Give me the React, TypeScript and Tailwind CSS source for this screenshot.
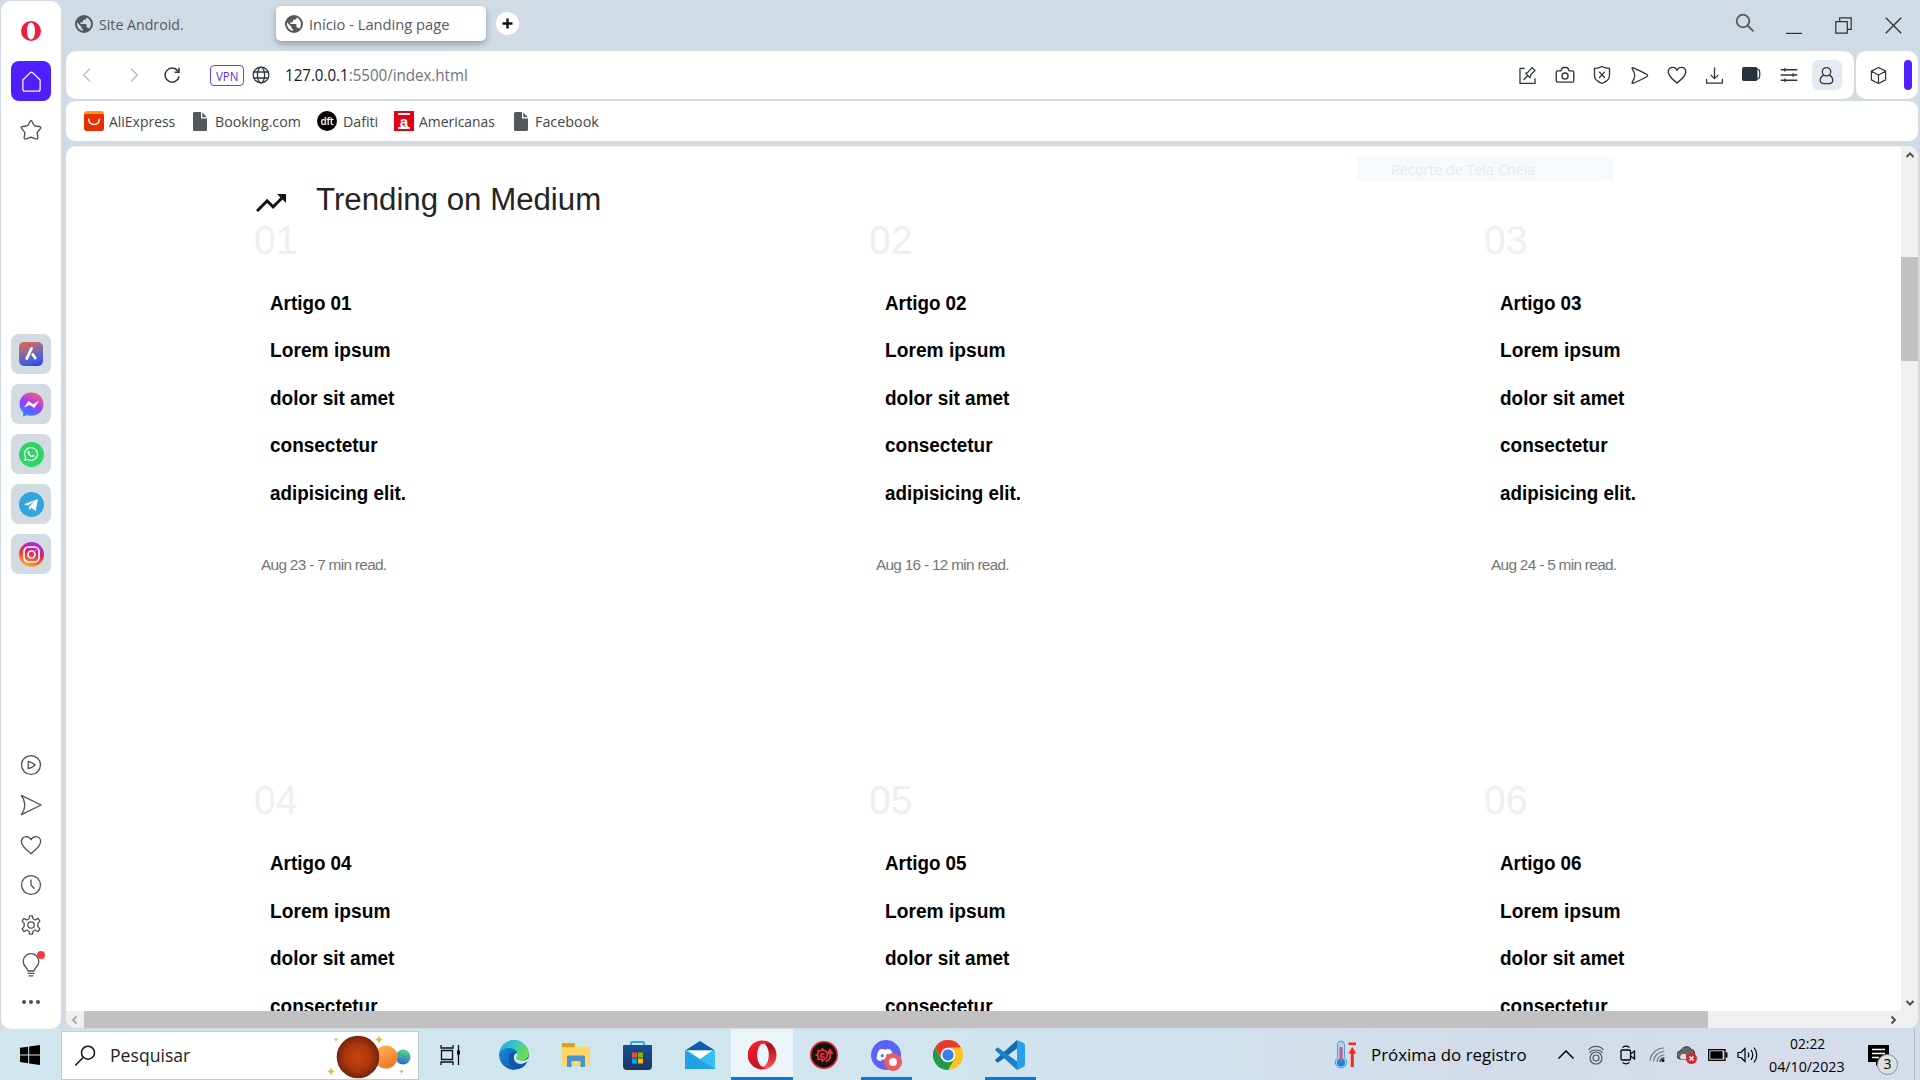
import { useLayoutEffect, useRef, useState, type ReactNode } from "react";
import { FaWhatsapp, FaDiscord } from "react-icons/fa";

/* Text set to an exact advance width, whatever the font's own metrics are. */
function Fit({ w, className = "", children }: { w: number; className?: string; children: ReactNode }) {
  const ref = useRef<HTMLSpanElement>(null);
  const [s, setS] = useState(1);
  useLayoutEffect(() => {
    if (ref.current) setS(w / ref.current.offsetWidth);
  }, [w]);
  return (
    <span className="block shrink-0" style={{ width: w }}>
      <span ref={ref} className={`inline-block origin-left whitespace-nowrap ${className}`} style={{ transform: `scaleX(${s})` }}>
        {children}
      </span>
    </span>
  );
}

function Ico({ size = 22, sw = 1.4, children, className = "" }: { size?: number; sw?: number; children: ReactNode; className?: string }) {
  return (
    <svg width={size} height={size} viewBox="0 0 24 24" fill="none" stroke="currentColor" strokeWidth={sw} strokeLinecap="round" strokeLinejoin="round" className={`shrink-0 ${className}`}>
      {children}
    </svg>
  );
}

function Earth() {
  return (
    <svg width="18" height="18" viewBox="0 0 24 24" className="shrink-0">
      <path fill="#55585b" d="M12 0a12 12 0 1 0 0 24 12 12 0 0 0 0-24zM10.600 21.300A9.400 9.400 0 0 1 2.600 12c0-.7.1-1.400.2-2.100l5.700 5.700v1.200c0 1.300 1 2.300 2.100 2.300zM18.700 18.400a2.300 2.300 0 0 0-2.200-1.600h-1.200v-3.500c0-.6-.5-1.200-1.100-1.200H7.200V9.700h2.300c.7 0 1.200-.5 1.200-1.100V6.200H13c1.300 0 2.400-1 2.400-2.300v-.5a9.300 9.300 0 0 1 3.300 15z" />
    </svg>
  );
}

function PageIcon() {
  return (
    <svg width="14" height="19" viewBox="0 0 14 19" className="shrink-0">
      <path fill="#55585b" d="M1.500 0H8v6.500h6v11a1.500 1.500 0 0 1-1.500 1.500h-11A1.500 1.500 0 0 1 0 17.500v-16A1.500 1.500 0 0 1 1.500 0z" />
      <path fill="#55585b" d="M9.300.3 13.700 5.200H9.300z" />
    </svg>
  );
}

function AliIcon() {
  return (
    <svg width="20" height="20" viewBox="0 0 20 20" className="shrink-0">
      <rect width="20" height="20" rx="3" fill="#ff9a00" />
      <path d="M0 4.500Q0 3 1.500 3h17Q20 3 20 4.500V17a3 3 0 0 1-3 3H3a3 3 0 0 1-3-3z" fill="#e62e04" />
      <path d="M4.700 8.200c.5 7 10.100 7 10.600 0" fill="none" stroke="#fff" strokeWidth="1.500" strokeLinecap="round" />
    </svg>
  );
}

function Heart({ size = 22, sw = 1.4 }: { size?: number; sw?: number }) {
  return (
    <Ico size={size} sw={sw}>
      <path d="M12 21.500C7 17.600 1.500 13.500 1.500 8.300c0-3.300 2.300-5.500 5.200-5.500 2.300 0 4.300 1.200 5.300 3.500 1-2.300 3-3.500 5.300-3.500 2.900 0 5.200 2.200 5.200 5.500 0 5.200-5.500 9.300-10.500 13.200z" />
    </Ico>
  );
}

function Tab({ active, w, children }: { active?: boolean; w: number; children: string }) {
  return (
    <div className={active ? "flex h-[35px] w-[210px] items-center gap-[6px] rounded-[5px] bg-white pl-[9px] shadow-[0_3px_6px_rgba(60,80,100,0.45)]" : "flex h-[35px] w-[201px] items-center gap-[6px]"}>
      <Earth />
      <Fit w={w} className="-mt-px text-[15px] text-[#55595d]">{children}</Fit>
    </div>
  );
}

function TopBar() {
  return (
    <div className="flex h-[51px] shrink-0 items-start pl-[9px] pt-[6px] text-[#43494f]">
      <Tab w={85}>Site Android.</Tab>
      <Tab active w={140}>Início - Landing page</Tab>
      <div className="ml-[10px] mt-[6px] flex h-[23px] w-[23px] items-center justify-center rounded-full bg-white text-[#111]">
        <svg width="11" height="11" viewBox="0 0 11 11"><path d="M5.500.5v10M.5 5.500h10" stroke="currentColor" strokeWidth="2.400" /></svg>
      </div>
      <div className="ml-auto flex items-start">
        <svg width="20" height="20" viewBox="0 0 20 20" className="mt-[7px]" fill="none" stroke="#555b61" strokeWidth="1.800"><circle cx="8" cy="8" r="6.300" /><path d="m12.500 12.500 6 5.800" /></svg>
        <svg width="16" height="14" viewBox="0 0 16 14" className="ml-[31px] mt-[14px]"><path d="M0 13.500h16" stroke="#2b3239" strokeWidth="1.400" /></svg>
        <svg width="17" height="17" viewBox="0 0 17 17" className="ml-[33px] mt-[11px]" fill="none" stroke="#2b3239" strokeWidth="1.200"><path d="M.8 4.700h11.500v11.500H.8zM4.700 4.500V.8h11.500v11.500h-3.700" /></svg>
        <svg width="17" height="17" viewBox="0 0 17 17" className="ml-[33px] mr-[18px] mt-[11px]" fill="none" stroke="#2b3239" strokeWidth="1.300"><path d="m.8.8 15.400 15.400M16.200.8.8 16.200" /></svg>
      </div>
    </div>
  );
}

const toolIcons: ReactNode[] = [
  <Ico key="a" size={19} sw={1.6}><path d="M8 3H2.500v19h19V16M7.500 17l5-5M9.800 9.300l5.500 5.500 1-4 5.200-5-3.500-3.800-5.200 5.500z" /></Ico>,
  <Ico key="b" size={20} sw={1.6}><path d="M3 7h4l1.500-3q.5-1 1.500-1h4q1 0 1.500 1L17 7h4q1.500 0 1.500 1.500V19q0 1.500-1.500 1.500H3q-1.500 0-1.500-1.500V8.500Q1.500 7 3 7z" /><circle cx="12" cy="13.300" r="3.700" /></Ico>,
  <Ico key="c" size={20} sw={1.6}><path d="M12 1.800c3 1.800 6 2.200 9 2.200v9c0 5-4.500 7.500-9 9.200C7.500 20.500 3 18 3 13V4c3 0 6-.4 9-2.200zM9 8.500l6 6.500M15 8.500 9 15" /></Ico>,
  <Ico key="d" size={19} sw={1.6}><path d="M3.500 2c6.500 2.800 12.500 5.500 18 8.800q1.500 1.200 0 2.400c-5.500 3.300-11.500 6-18 8.800Q2 22 3 20c4-6 4-10 0-16Q2 2 3.500 2z" /></Ico>,
  <Heart key="e" size={20} sw={1.7} />,
  <Ico key="f" size={19} sw={1.6}><path d="M12 2.500v13M7.500 11.500 12 16l4.500-4.500M2 17v4.500h20V17" /></Ico>,
  <svg key="g" width="19" height="14" viewBox="0 0 19 14" className="-ml-[2px] -mt-[2px]"><rect width="15.500" height="14" rx="1.800" fill="#27323a" /><path d="M15 2c2.500.5 2.800 1.500 2.800 5s-.3 4.500-2.800 5" fill="none" stroke="#27323a" strokeWidth="1.200" /></svg>,
  <Ico key="h" size={18} sw={1.7} className="-ml-px"><path d="M1.500 5h21M1.500 12h21M1.500 19h21M6.500 3.300v3.400M17.500 10.300v3.400M6.500 17.300v3.400" /></Ico>,
  <div key="i" className="-ml-px flex h-[30px] w-[30px] items-center justify-center rounded-[6px] bg-[#e5eaf0]"><Ico size={19} sw={1.6}><circle cx="12" cy="7.300" r="5.300" /><path d="M8.500 11.500C5.500 13 4 15.500 4 18.500c0 2.500 2.500 3.800 8 3.800s8-1.300 8-3.800c0-3-1.500-5.500-4.500-7" /></Ico></div>,
];

function AddressBar() {
  return (
    <div className="flex h-[48px] shrink-0 gap-[2px] text-[#2b333b]">
      <div className="flex w-[1788px] items-center rounded-[10px] bg-white">
        <Ico size={16} sw={1.8} className="ml-[13px] text-[#b4b9be]"><path d="M16 3 7 12l9 9" /></Ico>
        <Ico size={16} sw={1.8} className="ml-[31px] text-[#b4b9be]"><path d="m8 3 9 9-9 9" /></Ico>
        <svg width="17" height="16" viewBox="0 0 17 16" className="ml-[22px]" fill="none" stroke="#2b333b" strokeWidth="1.500"><path d="M13.800 4A7 7 0 1 0 15 9.500M15 .8v4.400h-4.400" /></svg>
        <div className="ml-[29px] flex h-[21px] w-[34px] items-center justify-center rounded-[4px] border border-[#6540e8]">
          <Fit w={22} className="text-[12px] leading-[18px] text-[#5a2ee0]">VPN</Fit>
        </div>
        <Ico size={18} sw={1.7} className="ml-[8px]"><circle cx="12" cy="12" r="10.500" /><ellipse cx="12" cy="12" rx="4.800" ry="10.500" /><path d="M2.500 8h19M2.500 16h19" /></Ico>
        <Fit w={183} className="ml-[15px] text-[16px] text-[#6b747d]"><span className="text-[#15191d]">127.0.0.1</span>:5500/index.html</Fit>
        <div className="ml-auto mr-[8px] flex">
          {toolIcons.map((n, i) => (
            <div key={i} className="flex h-[30px] w-[37.500px] items-center justify-center">{n}</div>
          ))}
        </div>
      </div>
      <div className="flex w-[62px] items-center rounded-[10px] bg-white pl-[13px]">
        <Ico size={19} sw={1.5}><path d="m12 2 9 4.500v11L12 22l-9-4.500v-11zM3 6.500l9 5 9-5M12 11.500V22" /></Ico>
        <div className="ml-[16px] h-[30px] w-[8px] rounded-[4px] bg-[#4f1fff]" />
      </div>
    </div>
  );
}

function Bookmarks() {
  const t = "text-[15px] text-[#3f454b]";
  return (
    <div className="mt-[2px] flex h-[40px] w-[1852px] shrink-0 items-center rounded-[9px] bg-white pl-[18px]">
      <AliIcon />
      <div className="w-[5px]" />
      <Fit w={66} className={t}>AliExpress</Fit>
      <div className="w-[18px]" />
      <PageIcon />
      <div className="w-[8px]" />
      <Fit w={86} className={t}>Booking.com</Fit>
      <div className="ml-[16px] mr-[6px] flex h-[20px] w-[20px] items-center justify-center rounded-full bg-black">
        <span className="text-[10px] font-semibold leading-[18px] tracking-[-0.3px] text-white">dft</span>
      </div>
      <Fit w={35} className={t}>Dafiti</Fit>
      <div className="ml-[16px] mr-[5px] flex h-[20px] w-[20px] flex-col items-center justify-between bg-[#e60014] py-[2px]">
        <div className="h-[2px] w-[12px] bg-white" />
        <span className="font-['Liberation_Sans'] text-[15px] font-bold leading-[7px] text-white">a</span>
        <div className="h-[2px] w-[12px] bg-white" />
      </div>
      <Fit w={76} className={t}>Americanas</Fit>
      <div className="w-[19px]" />
      <PageIcon />
      <div className="w-[7px]" />
      <Fit w={64} className={t}>Facebook</Fit>
    </div>
  );
}

function Article({ n, meta, metaW }: { n: string; meta?: string; metaW?: number }) {
  return (
    <div className="h-[560.500px] w-[615px] shrink-0">
      <div className="h-[40px] text-[40px] leading-[40px] text-[#efefef]">
        <Fit w={44}>{n}</Fit>
      </div>
      <div className="pl-[15.500px] pt-[20px] text-[19.500px] font-bold leading-[47.600px] text-black">
        <Fit w={82}>Artigo {n}</Fit>
        <Fit w={120}>Lorem ipsum</Fit>
        <Fit w={124.5}>dolor sit amet</Fit>
        <Fit w={108}>consectetur</Fit>
        {meta && <Fit w={136}>adipisicing elit.</Fit>}
      </div>
      {meta && (
        <div className="pl-[7px] pt-[38px] text-[15.500px] leading-[20px] text-[#757575]">
          <Fit w={metaW ?? 125} className="tracking-[-0.7px]">{meta}</Fit>
        </div>
      )}
    </div>
  );
}

function Chevron({ d, color = "#505050" }: { d: string; color?: string }) {
  return (
    <svg width="10" height="10" viewBox="0 0 10 10" fill="none" stroke={color} strokeWidth="2"><path d={d} /></svg>
  );
}

function Content() {
  return (
    <div className="mt-[5px] flex h-[882px] w-[1852px] shrink-0 flex-col overflow-hidden rounded-[10px] bg-white font-['Liberation_Sans',sans-serif]">
      <div className="flex h-[865px]">
        <div className="relative w-[1835px] overflow-hidden border-t border-[#f4f4f4] pl-[188px]">
          <div className="absolute left-[1291px] top-[10px] h-[24px] w-[257px] bg-[#f5faff] pl-[34px] font-['Open_Sans'] text-[15px] leading-[25px] text-[#e3ebf0]">
            <Fit w={144}>Recorte de Tela Cheia</Fit>
          </div>
          <div className="flex h-[72.500px] items-start pt-[31px]">
            <svg width="36" height="36" viewBox="0 0 24 24" className="-ml-[1px] mt-[7px]"><path fill="#151515" d="m16 6 2.290 2.290-4.880 4.880-4-4L2 16.590 3.410 18l6-6 4 4 6.300-6.290L22 12V6z" /></svg>
            <div className="ml-[27px] text-[31px] leading-[44px] text-[#242424]"><Fit w={285}>Trending on Medium</Fit></div>
          </div>
          <div className="flex w-[1900px] flex-wrap">
            <Article n="01" meta="Aug 23 - 7 min read." metaW={125} />
            <Article n="02" meta="Aug 16 - 12 min read." metaW={132.5} />
            <Article n="03" meta="Aug 24 - 5 min read." metaW={125} />
            <Article n="04" />
            <Article n="05" />
            <Article n="06" />
          </div>
        </div>
        <div className="flex w-[17px] flex-col items-center bg-[#f0f0f0]">
          <div className="flex h-[18px] items-center"><Chevron d="M1.500 7 5 3.500 8.500 7" /></div>
          <div className="mt-[93px] h-[104px] w-full bg-[#c1c1c1]" />
          <div className="mt-auto flex h-[18px] items-center"><Chevron d="M1.500 4 5 7.500 8.500 4" /></div>
        </div>
      </div>
      <div className="flex h-[17px] items-center bg-[#f0f0f0]">
        <div className="flex w-[18px] justify-center"><Chevron d="M6.500 1.500 3 5l3.500 3.500" color="#a8a8a8" /></div>
        <div className="h-full w-[1624px] bg-[#c1c1c1]" />
        <div className="ml-auto mr-[20px]"><Chevron d="M3.500 1.500 7 5 3.500 8.500" /></div>
      </div>
    </div>
  );
}

function AppTile({ children }: { children: ReactNode }) {
  return <div className="flex h-[40px] w-[40px] items-center justify-center rounded-[8px] bg-[#d1dbe1]">{children}</div>;
}

function Sidebar() {
  return (
    <div className="ml-[1px] mt-[1px] flex h-[1028px] w-[60px] shrink-0 flex-col items-center rounded-[10px] bg-white text-[#4a5056]">
      <svg width="20" height="20" viewBox="0 0 20 20" className="mt-[20px]">
        <path fillRule="evenodd" fill="#f21c3c" d="M10 0a10 10 0 1 1 0 20 10 10 0 0 1 0-20zm0 1.500C7.500 1.500 6 5.500 6 10s1.500 8.500 4 8.500 4-4 4-8.500-1.500-8.500-4-8.500z" />
      </svg>
      <div className="mt-[20px] flex h-[40px] w-[40px] items-center justify-center rounded-[8px] bg-[#4f1fff] text-white">
        <Ico size={23} sw={1.3}><path d="M3 10.500 10.500 3q1.500-1.300 3 0L21 10.500V20q0 2-2 2H5q-2 0-2-2z" /></Ico>
      </div>
      <Ico size={24} sw={1.4} className="mt-[17px]"><path d="M12 2.500c1.300 0 2 4 3.300 5s6 .5 6.500 1.800-3.200 3.700-3.600 5.300 1.500 5.400.3 6.200S13.600 19.300 12 19.300s-5.300 2.300-6.500 1.500.7-4.600.3-6.200S1.800 10.600 2.200 9.300s5.200-.8 6.500-1.800 2-5 3.300-5z" /></Ico>
      <div className="mt-[192px] flex flex-col gap-[10px]">
        <AppTile>
          <div className="flex h-[24px] w-[24px] items-center justify-center rounded-[5px] bg-[linear-gradient(160deg,#e0604f_5%,#8f6b9a_40%,#3f5fe0_75%,#4a2fd0)]">
            <svg width="24" height="24" viewBox="0 0 24 24" stroke="#fff" strokeLinecap="round" fill="none"><path d="M12.500 6.500 7.800 16.500" strokeWidth="2.800" /><path d="m13.800 12.500 2.400 3.500" strokeWidth="2.800" /></svg>
          </div>
        </AppTile>
        <AppTile>
          <svg width="25" height="25" viewBox="0 0 25 25">
            <defs><linearGradient id="ms" x1="0.200" y1="1" x2="0.700" y2="0"><stop offset="0" stopColor="#1890ff" /><stop offset="0.500" stopColor="#9a3dfb" /><stop offset="1" stopColor="#ff5c78" /></linearGradient></defs>
            <path fill="url(#ms)" d="M12.500.5C5.700.5.500 5.400.500 12c0 3.400 1.200 6 3.700 8.300v4.200l3.600-1.500c1.400.5 3 .8 4.700.8 6.800 0 12-5 12-11.700S19.300.5 12.500.5z" />
            <path fill="#fff" d="m5 15.500 4.500-6.500 4.500 3 6-3-4.700 7-4.800-3z" />
          </svg>
        </AppTile>
        <AppTile>
          <div className="flex h-[25px] w-[25px] items-center justify-center rounded-full bg-[#2fd366] text-[16px] text-white"><FaWhatsapp /></div>
        </AppTile>
        <AppTile>
          <svg width="25" height="25" viewBox="0 0 25 25"><circle cx="12.500" cy="12.500" r="12.500" fill="#32a5dc" /><path fill="#fff" d="m5 12.300 14-5.300-2.400 12-4.200-3-2 2-.4-3.600 6-5.500-7.400 4.700z" /></svg>
        </AppTile>
        <AppTile>
          <div className="flex h-[25px] w-[25px] items-center justify-center rounded-full bg-[linear-gradient(20deg,#ffc04a_5%,#fb6a28_30%,#e0245f_55%,#a82bd8_85%)]">
            <svg width="17" height="17" viewBox="0 0 17 17" fill="none" stroke="#fff" strokeWidth="1.700"><rect x="1" y="1" width="15" height="15" rx="4.500" /><circle cx="8.500" cy="8.500" r="3.500" /><path d="M12.500 4.300h.6" /></svg>
          </div>
        </AppTile>
      </div>
      <div className="mt-[180px] flex flex-col items-center gap-[18px]">
        <Ico size={22} sw={1.400}><circle cx="12" cy="12" r="10.300" /><path d="M9 8c3 .9 5.500 2 7.500 4-2 2-4.500 3.100-7.500 4z" /></Ico>
        <Ico size={22} sw={1.400}><path d="M1.500 1.500 23 12 1.500 22.500Q9 12 1.500 1.500z" /></Ico>
        <Heart />
        <Ico size={22} sw={1.400}><circle cx="12" cy="12" r="10.300" /><path d="M12 6.500V12l3.500 3.500" /></Ico>
        <Ico size={22} sw={1.400}><path d="M9.800 5.200 10.500 2h3l.7 3.200 2.300 1.300 3.200-1.700 2 3-2.200 2.500v3.400l2.200 2.500-2 3-3.200-1.700-2.300 1.300-.7 3.200h-3l-.7-3.200-2.300-1.300-3.200 1.700-2-3 2.200-2.500v-3.400L2.300 7.800l2-3 3.200 1.700z" /><circle cx="12" cy="12" r="3.500" /></Ico>
        <div className="relative">
          <Ico size={24} sw={1.300} className="-my-[1px]"><path d="M9 18c0-3-4.800-4-4.800-9.500a7.800 7.800 0 0 1 15.600 0C19.800 14 15 15 15 18zM9 20.300h6M10 22.800h4" /></Ico>
          <div className="absolute -top-[3px] left-[18px] h-[8px] w-[8px] rounded-full bg-[#fa3a3a]" />
        </div>
        <svg width="18" height="4" viewBox="0 0 18 4" className="mt-[6px]" fill="#4a5056"><circle cx="2" cy="2" r="2" /><circle cx="9" cy="2" r="2" /><circle cx="16" cy="2" r="2" /></svg>
      </div>
    </div>
  );
}

function SearchArt() {
  return (
    <svg width="86" height="46" viewBox="0 0 86 46">
      <defs>
        <radialGradient id="mars"><stop offset="0" stopColor="#c8440e" /><stop offset="0.600" stopColor="#ac360c" /><stop offset="1" stopColor="#74240c" /></radialGradient>
        <linearGradient id="venus" x1="0" y1="0" x2="0.500" y2="1"><stop offset="0" stopColor="#ffb95e" /><stop offset="1" stopColor="#f07a28" /></linearGradient>
        <linearGradient id="earth" x1="0.600" y1="0" x2="0.400" y2="1"><stop offset="0" stopColor="#58d68a" /><stop offset="1" stopColor="#2868d8" /></linearGradient>
      </defs>
      <circle cx="76" cy="24" r="7.500" fill="url(#earth)" />
      <circle cx="59" cy="24" r="11.500" fill="url(#venus)" />
      <circle cx="31" cy="24" r="21.300" fill="url(#mars)" />
      <g fill="#e3bd3c">
        <path d="M52 2.500 53.200 5.200 56 6.500 53.200 7.700 52 10.500 50.800 7.700 48 6.500 50.800 5.200z" />
        <path d="M4 34.500 5.200 37.200 8 38.500 5.200 39.700 4 42.500 2.800 39.700 0 38.500 2.800 37.200z" />
        <path d="M9 4 9.700 5.800 11.500 6.500 9.700 7.200 9 9 8.300 7.200 6.500 6.500 8.300 5.800zM74.500 36 75.200 37.800 77 38.500 75.200 39.200 74.500 41 73.800 39.200 72 38.500 73.800 37.800z" />
      </g>
    </svg>
  );
}

const taskIcons: { key: string; active?: boolean; line?: boolean; icon: ReactNode }[] = [
  {
    key: "edge",
    icon: (
      <svg width="30" height="30" viewBox="0 0 30 30">
        <defs>
          <linearGradient id="eg" x1="0" y1="0" x2="1" y2="0.400"><stop offset="0" stopColor="#2aa5d8" /><stop offset="0.500" stopColor="#36c4c8" /><stop offset="1" stopColor="#6be04e" /></linearGradient>
          <linearGradient id="eb" x1="0" y1="0" x2="1" y2="1"><stop offset="0" stopColor="#1d8fe0" /><stop offset="1" stopColor="#0b4f9e" /></linearGradient>
          <clipPath id="ec"><circle cx="15" cy="15" r="15" /></clipPath>
        </defs>
        <g clipPath="url(#ec)">
          <circle cx="15" cy="15" r="15" fill="url(#eb)" />
          <path fill="#0d56a8" d="M11 14c-3.500 6-.5 14.500 9 14.500 4 0 7-2.500 8.300-5.500-5 2.500-13.500 1-13.500-5.500 0-2.500 2-4.500 3.500-5-3-.6-5.500-.5-7.300 1.500z" />
          <path fill="#d3e7ef" d="M18.300 12.800c-2 .2-3.500 2-3.500 4.700 0 4.500 4.500 7.500 9.500 6 1.500-.5 3-1.200 4-2L31 23v-8c-1 3.500-4 5.600-7.500 5.600-3.500 0-5.500-1.500-5.500-2.600s1.600-2 .3-5.200z" />
          <path fill="url(#eg)" d="M0 13C1 5 7.500 0 15 0c8.500 0 15 6 15 13 0 4.500-3.500 7.500-7.500 7.500-3.500 0-5.500-1.500-5.500-2.500s1.500-1.500 1.500-4C18.500 11 15 8 10.500 8 6 8 2 9.500 0 13z" />
        </g>
      </svg>
    ),
  },
  {
    key: "explorer",
    icon: (
      <svg width="28" height="24" viewBox="0 0 28 24" className="-ml-px">
        <path fill="#ffd766" d="M0 4h10l3-.5h14a1 1 0 0 1 1 1V22a1 1 0 0 1-1 1H1a1 1 0 0 1-1-1z" />
        <path fill="#d9a21b" d="M0 1a1 1 0 0 1 1-1h11a1 1 0 0 1 1 1v2l-1.500 1.300H0z" />
        <path fill="#4a93cc" d="M5 24V14a1.500 1.500 0 0 1 1.500-1.500h15A1.500 1.500 0 0 1 23 14v10h-4.500v-6h-9v6z" />
      </svg>
    ),
  },
  {
    key: "store",
    icon: (
      <svg width="29" height="30" viewBox="0 0 29 30" className="-ml-px">
        <defs><linearGradient id="st" x1="0" y1="0" x2="0" y2="1"><stop offset="0" stopColor="#17508f" /><stop offset="1" stopColor="#1b3566" /></linearGradient></defs>
        <path d="M8 7V3a1 1 0 0 1 1-1h11a1 1 0 0 1 1 1v4" fill="none" stroke="#2ea7e6" strokeWidth="1.800" />
        <path fill="url(#st)" d="M0 6q0-1 1-1h27q1 0 1 1v20a4 4 0 0 1-4 4H4a4 4 0 0 1-4-4z" />
        <path fill="#f25022" d="M9 12.500h5v5H9z" /><path fill="#7fba00" d="M15 12.500h5v5h-5z" /><path fill="#00a4ef" d="M9 18.500h5v5H9z" /><path fill="#ffb900" d="M15 18.500h5v5h-5z" />
      </svg>
    ),
  },
  {
    key: "mail",
    icon: (
      <svg width="30" height="28" viewBox="0 0 30 28">
        <path fill="#0b5ca8" d="M0 9.500 15 0l15 9.500z" /><path fill="#36c0f2" d="M0 9.500h30V28H0z" /><path fill="#239fe4" d="M0 9.500v18.500h30z" /><path fill="#38bff0" d="m15 18 15-8.500V28z" /><path fill="#fff" d="M2.500 9.500h25L15 18z" />
      </svg>
    ),
  },
  {
    key: "opera",
    active: true,
    line: true,
    icon: (
      <svg width="29" height="30" viewBox="0 0 30 30">
        <defs>
          <linearGradient id="op" x1="0" y1="0" x2="0" y2="1"><stop offset="0" stopColor="#ff1b2d" /><stop offset="1" stopColor="#c01422" /></linearGradient>
          <linearGradient id="op2" x1="0" y1="0" x2="0" y2="1"><stop offset="0" stopColor="#9c0010" /><stop offset="1" stopColor="#ff5555" /></linearGradient>
        </defs>
        <path fill="url(#op2)" d="M10 3.500C14 .5 18 0 20 1c5.500 2 9.500 7.500 9.500 14S25.500 27 20 29c-3 1-7 0-10-2.500z" />
        <path fill="url(#op)" d="M15 0a15 15 0 1 0 5 29c-1 0-8 1-10-10-1-8 2-15 8-15.500C20.500 3.200 22 4 23 5 21 2 18 0 15 0z" />
        <ellipse cx="15.500" cy="15" rx="6" ry="11.800" fill="#ecf5f9" />
      </svg>
    ),
  },
  {
    key: "game",
    icon: (
      <svg width="28" height="28" viewBox="0 0 28 28" className="-ml-px">
        <circle cx="14" cy="14" r="13.200" fill="#141214" stroke="#e5262c" strokeWidth="1.600" />
        <g fill="none" stroke="#ef3138" strokeWidth="1.800"><circle cx="12.500" cy="14" r="4.800" /><path d="M12.500 7v2.500M12.500 18.500V21M5.500 14H8M7.500 9l1.800 1.800M7.500 19l1.800-1.800M14.500 13.500a2 2 0 1 0 0 2M15.500 20.500c4-.8 5.500-4 4.500-9" /></g>
        <path fill="#ef3138" d="m20 7 3.500 6h-7z" />
      </svg>
    ),
  },
  {
    key: "discord",
    line: true,
    icon: (
      <div className="relative flex h-[30px] w-[30px] items-center justify-center rounded-full bg-[#5865f2] pr-[2px] text-[18px] text-white">
        <FaDiscord />
        <div className="absolute -bottom-[1px] -right-[1px] flex h-[18px] w-[18px] items-center justify-center rounded-full bg-[#ed5a62]"><div className="h-[8px] w-[8px] rounded-full bg-white" /></div>
      </div>
    ),
  },
  {
    key: "chrome",
    icon: (
      <svg width="30" height="30" viewBox="0 0 30 30">
        <circle cx="15" cy="15" r="15" fill="#fcc31e" />
        <path fill="#e33b2e" d="M2 7.500a15 15 0 0 1 26 0H15L9 18.500z" /><path fill="#219a4a" d="M2 7.500A15 15 0 0 0 15 30l6.500-11.200L15 22l-6.500-3.300z" />
        <circle cx="15" cy="15" r="7.300" fill="#fff" /><circle cx="15" cy="15" r="5.700" fill="#3b7de9" />
      </svg>
    ),
  },
  {
    key: "code",
    line: true,
    icon: (
      <svg width="30" height="30" viewBox="0 0 30 30">
        <path fill="#1668ad" d="M22 0v8.500L3.500 22.300q-.8.500-1.500 0L.5 21q-.7-.8 0-1.500z" />
        <path fill="#1b7fc9" d="M22 30v-8.500L3.500 7.700q-.8-.5-1.500 0L.5 9q-.7.8 0 1.500z" />
        <path fill="#2a9fea" d="m22 0 6.500 3q1.500.8 1.500 2.300v19.400q0 1.500-1.500 2.300L22 30z" />
      </svg>
    ),
  },
];

function Tray() {
  return (
    <div className="flex h-[51px] items-center text-black">
      <svg width="24" height="30" viewBox="0 0 24 30">
        <path d="M3.500 4.500a3.500 3.500 0 0 1 7 0v13.200a5.700 5.700 0 1 1-7 0z" fill="#a9d3ef" stroke="#5a9bd0" strokeWidth="1" /><circle cx="7" cy="22.500" r="4" fill="#1787dc" /><path d="M7 7v14" stroke="#c75b86" strokeWidth="3" />
        <path d="M14.500 2.500h7.500v2.500h-7.500zM18.300 7l4 6.500h-2.500V27h-3V13.500h-2.500z" fill="#ef2b1d" />
      </svg>
      <Fit w={156} className="ml-[13px] text-[17px]">Próxima do registro</Fit>
      <svg width="16" height="9" viewBox="0 0 16 9" className="ml-[44px]" fill="none" stroke="currentColor" strokeWidth="1.500"><path d="M.5 8.500 8 1l7.500 7.500" /></svg>
      <svg width="18" height="20" viewBox="0 0 18 20" className="ml-[13px]" fill="none" stroke="#555" strokeWidth="1.200"><circle cx="9" cy="13" r="6" /><circle cx="9" cy="13" r="3" /><path d="M2.500 8C5 4 13 4 15.500 8M1.500 5C5 .2 13 .2 16.500 5" /></svg>
      <svg width="16" height="20" viewBox="0 0 16 20" className="ml-[15px]" fill="none" stroke="currentColor" strokeWidth="1.300"><rect x="1" y="5" width="9.500" height="10" rx="1" /><path d="m10.500 9 4-3v8l-4-3M2.500 2.500c2-1.500 5-1.500 7 0M2.500 17.500c2 1.500 5 1.500 7 0" /></svg>
      <svg width="17" height="17" viewBox="0 0 17 17" className="ml-[13px]" fill="none" stroke="#777" strokeWidth="1.200"><path d="M1 15A14 14 0 0 1 15 2M4.500 15.500A10.500 10.500 0 0 1 15.500 5.500M8 16a7 7 0 0 1 7.500-7" /><circle cx="14" cy="14.500" r="1.500" fill="#000" stroke="none" /><path d="M11 16a4 4 0 0 1 4.500-4" stroke="#333" /></svg>
      <svg width="22" height="20" viewBox="0 0 22 20" className="ml-[11px]"><path d="M4 14a4 4 0 0 1-.5-8C5 2 11-.5 14.500 4.500c3 .2 4 4 2 6.500v3z" fill="#666" stroke="#333" /><path d="M3 12.500C3 9 7 8 9 9.500V14H4z" fill="#ddd" /><circle cx="14.500" cy="13.500" r="5.500" fill="#d9252c" /><path d="m12.500 11.500 4 4m0-4-4 4" stroke="#fff" strokeWidth="1.500" /></svg>
      <svg width="20" height="12" viewBox="0 0 20 12" className="ml-[9px]" fill="none" stroke="currentColor" strokeWidth="1.300"><rect x=".7" y=".7" width="16.300" height="10.600" /><path d="M3 3h11v6H3z" fill="currentColor" /><path d="M18.500 3.500v5" strokeWidth="2" /></svg>
      <svg width="22" height="18" viewBox="0 0 22 18" className="ml-[9px]" fill="none" stroke="currentColor" strokeWidth="1.200"><path d="M1 6.500h3L8 2.500v13l-4-4H1zM11 6.500q1.500 2.500 0 5M14 4q3.500 5 0 10M17 1.500q5.500 7.500 0 15" /></svg>
      <div className="ml-[9px] flex w-[78px] flex-col items-center text-[15px] leading-[23px]">
        <Fit w={35}>02:22</Fit>
        <Fit w={76}>04/10/2023</Fit>
      </div>
      <div className="relative ml-[22px] mr-[24px]">
        <svg width="22" height="22" viewBox="0 0 22 22"><path d="M0 1h21v17h-9l-4 4v-4H0z" /><path d="M4 5.500h13M4 9.500h13M4 13.500h7" stroke="#fff" strokeWidth="1.300" /></svg>
        <div className="absolute left-[9px] top-[10px] flex h-[21px] w-[21px] items-center justify-center rounded-full border border-[#8a8f96] bg-[#dcdfe2] text-[14px] leading-[18px]">3</div>
      </div>
      <div className="h-[51px] w-px bg-[#b0b8c4]" />
      <div className="w-[5px]" />
    </div>
  );
}

function Taskbar() {
  return (
    <div className="flex h-[51px] shrink-0 items-center bg-[linear-gradient(90deg,#d0e6ef_0%,#d0e6ef_40%,#d0e3ee_60%,#d3dbe9_78%,#d5dcea)]">
      <div className="flex w-[61px] justify-center pr-px">
        <svg width="20" height="20" viewBox="0 0 20 20"><path d="M0 2.800 8.200 1.700v7.700H0zM9.200 1.500 20 0v9.400H9.200zM0 10.500h8.200v7.700L0 17.100zM9.200 10.500H20V20L9.200 18.400z" /></svg>
      </div>
      <div className="flex h-[49px] w-[358px] items-center self-end border border-[#c4ccd1] bg-white pl-[13px]">
        <svg width="21" height="21" viewBox="0 0 21 21" fill="none" stroke="#111" strokeWidth="1.500"><circle cx="13" cy="7.700" r="6.500" /><path d="m8.300 12.300-8 8.200" /></svg>
        <Fit w={80} className="-mt-[2px] ml-[14px] text-[18.500px] text-[#222]">Pesquisar</Fit>
        <div className="ml-[151px]"><SearchArt /></div>
      </div>
      <div className="flex w-[64px] justify-center pr-[2px]">
        <svg width="21" height="20" viewBox="0 0 21 20" fill="none" stroke="#111" strokeWidth="1.300"><path d="M1.500 5.500h11v9h-11zM1 0v3h12V0M1 20v-3h12v3M18.500 0v20" /><path d="M17 5.500h3v4h-3z" fill="#111" stroke="none" /></svg>
      </div>
      {taskIcons.map((t) => (
        <div key={t.key} className={`relative flex h-full w-[62px] items-center justify-center ${t.active ? "bg-[#ebf4f8]" : ""}`}>
          {t.icon}
          {t.line && <div className={`absolute bottom-0 h-[3px] bg-[#0f78cc] ${t.active ? "w-[62px]" : "w-[51px]"}`} />}
        </div>
      ))}
      <div className="ml-auto"><Tray /></div>
    </div>
  );
}

export default function App() {
  return (
    <div className="flex h-[1080px] w-[1920px] flex-col overflow-hidden bg-[#d1dbe3] font-['Open_Sans',sans-serif]">
      <div className="flex h-[1029px] shrink-0">
        <Sidebar />
        <div className="ml-[5px] flex w-[1854px] flex-col">
          <TopBar />
          <AddressBar />
          <Bookmarks />
          <Content />
        </div>
      </div>
      <Taskbar />
    </div>
  );
}
